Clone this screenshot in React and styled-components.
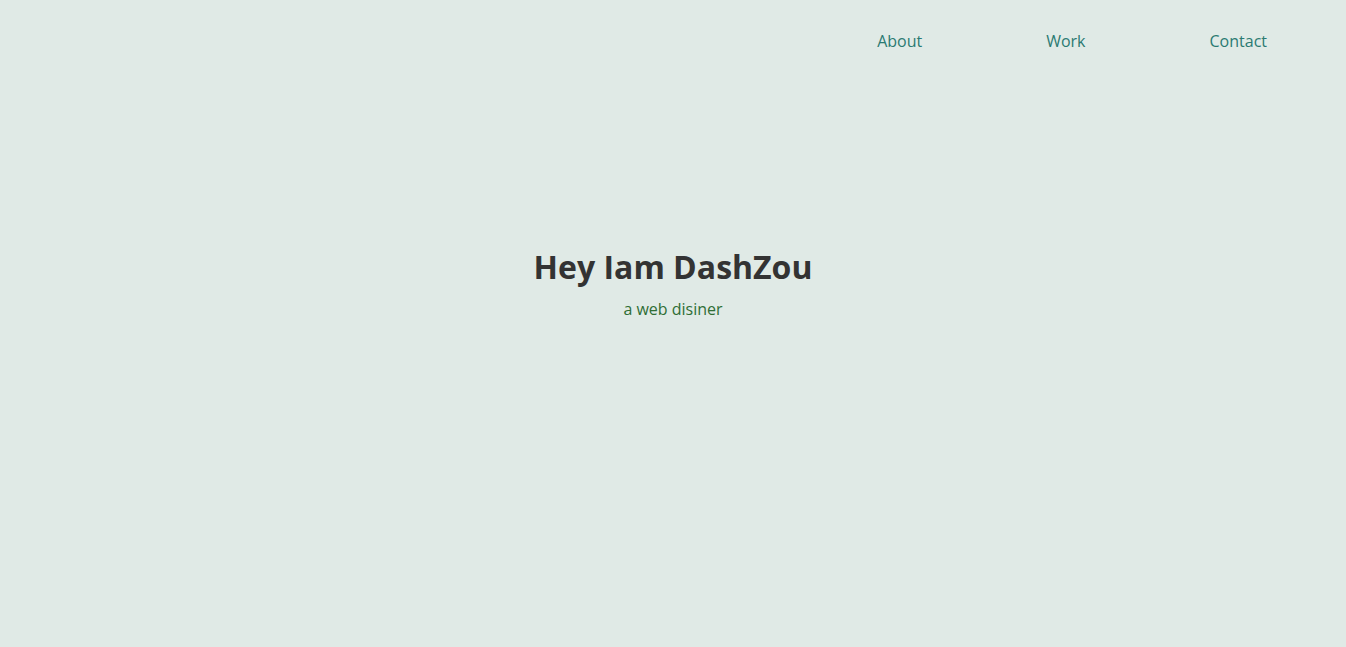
import React from 'react'
import styled, { createGlobalStyle } from 'styled-components'

const GlobalStyle = createGlobalStyle`
    body {
        margin: 0;
        background: #e0eae6;
        font-family: "Open Sans", "Noto Sans", sans-serif;
    }
`;

const Page = styled.div`
    min-height: 647px;
    display: flex;
    flex-direction: column;
`;

const Nav = styled.nav`
    display: flex;
    justify-content: flex-end;
    gap: 124px;
    padding: 30px 79px 0 0;
`;

const NavLink = styled.a`
    font-size: 16px;
    line-height: 22px;
    color: #2b7a72;
    text-decoration: none;
    cursor: pointer;
`;

const Hero = styled.div`
    display: flex;
    flex-direction: column;
    align-items: center;
    padding-top: 193px;
`;

const Title = styled.h1`
    margin: 0;
    font-size: 32px;
    line-height: 44px;
    font-weight: 700;
    color: #333333;
`;

const Subtitle = styled.p`
    margin: 9px 0 0;
    font-size: 16px;
    line-height: 22px;
    color: #2f6e35;
`;

const App = () => {
  return (
    <Page>
        <GlobalStyle/>
        <Nav>
            <NavLink>About</NavLink>
            <NavLink>Work</NavLink>
            <NavLink>Contact</NavLink>
        </Nav>
        <Hero>
            <Title>Hey Iam DashZou</Title>
            <Subtitle>a web disiner</Subtitle>
        </Hero>
    </Page>
  )
}

export default App
